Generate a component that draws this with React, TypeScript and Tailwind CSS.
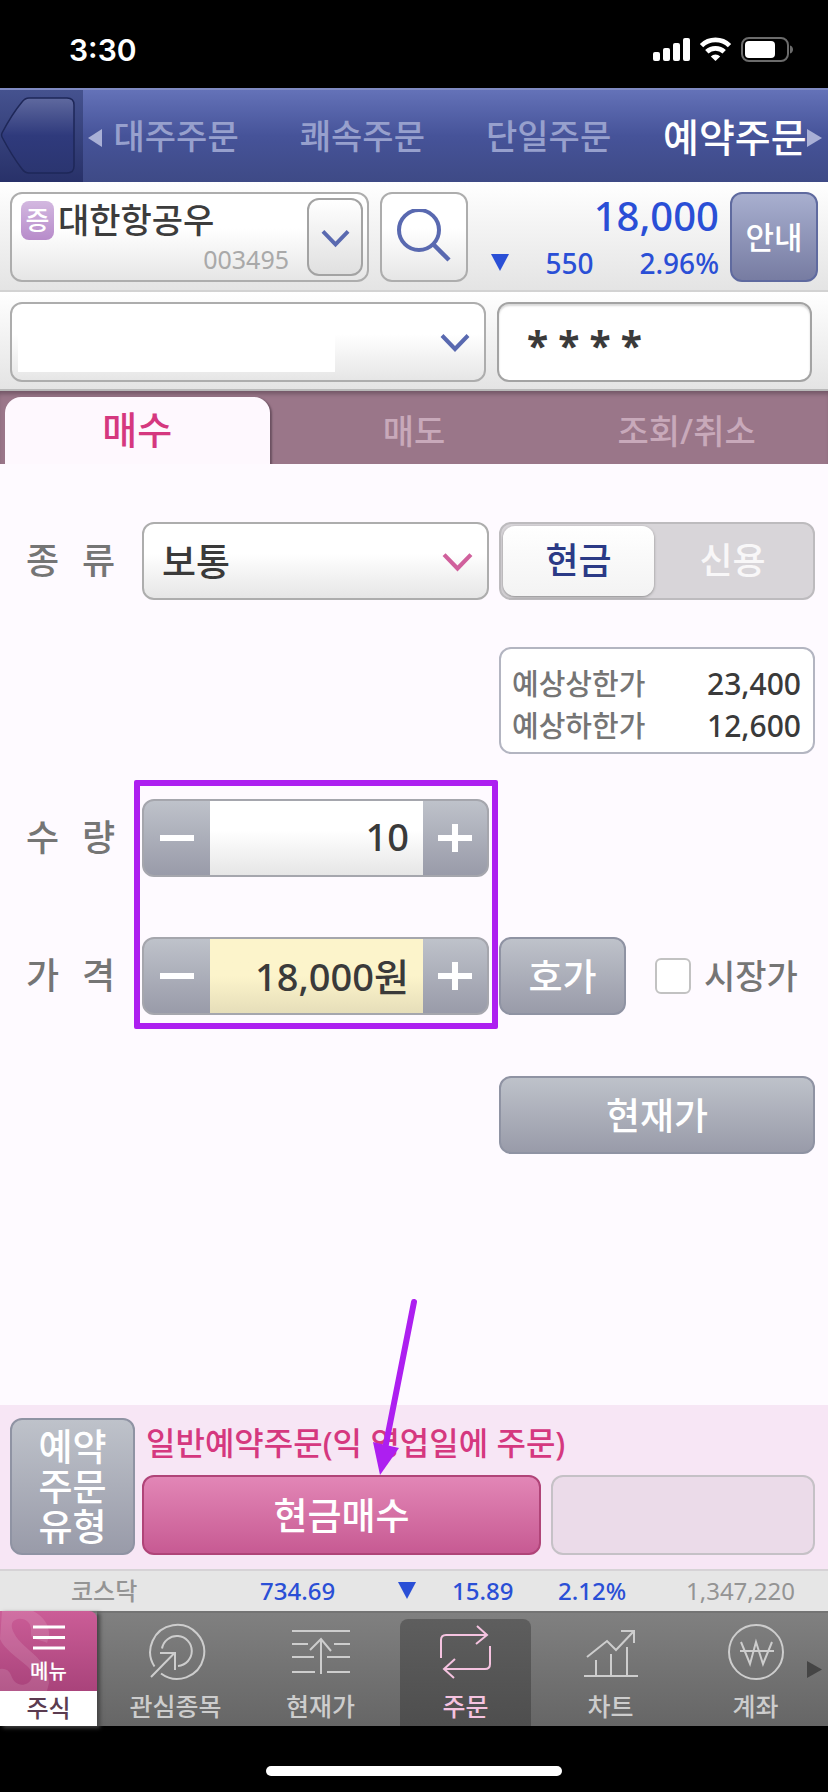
import { useState } from "react";
import type { ReactNode } from "react";
import clsx from "clsx";

const orderTabs = ["대주주문", "쾌속주문", "단일주문"];

const greyButton =
  "rounded-xl border-2 border-[#8f93a3] bg-linear-to-b from-[#bec2ca] to-[#999ba9] text-white font-medium";
const paleBox =
  "rounded-xl border-2 border-[#adadad] bg-linear-to-b from-white from-40% to-[#e6e6e6]";

function Chevron({ className }: { className?: string }) {
  return (
    <svg viewBox="0 0 30 20" className={className} fill="none" stroke="currentColor" strokeWidth="4">
      <path d="M2 2.5 15 16 28 2.5" />
    </svg>
  );
}

function StatusBar() {
  return (
    <div className="flex h-[88px] items-center justify-between bg-black pr-[34px] pl-[69px] pt-3 text-white">
      <span className="font-['Inter',sans-serif] text-[30px] leading-none font-semibold">3:30</span>
      <svg width="141" height="26" viewBox="0 0 141 26">
        <g fill="#fff">
          <rect x="0" y="15" width="7" height="9" rx="2" />
          <rect x="10" y="11" width="7" height="13" rx="2" />
          <rect x="20" y="6" width="7" height="18" rx="2" />
          <rect x="30" y="1" width="7" height="23" rx="2" />
          <path d="M62.5 24 57.8 19.4a6.800 6.800 0 0 1 9.400 0Z" />
        </g>
        <g fill="none" stroke="#fff" strokeWidth="4.800">
          <path d="M48.500 8.600a20 20 0 0 1 28 0" />
          <path d="M53.800 14.800a12.500 12.500 0 0 1 17.400 0" />
        </g>
        <rect x="89" y="1" width="46" height="23" rx="7" fill="none" stroke="#6b6b6b" strokeWidth="2" />
        <rect x="92" y="4" width="30" height="17" rx="4" fill="#fff" />
        <path d="M137 8.500c4 1 4 7 0 8Z" fill="#6b6b6b" />
      </svg>
    </div>
  );
}

function TopNav() {
  return (
    <nav className="flex h-[94px] items-center border-t-2 border-[#7f8ac2] bg-linear-to-b from-[#6472b8] via-[#465399] to-[#3e4a86]">
      <button aria-label="뒤로" className="h-full w-[83px] shrink-0 bg-linear-to-b from-[#45528f] to-[#283169]">
        <svg viewBox="0 0 83 92" className="h-full w-full">
          <defs>
            <linearGradient id="back" x1="0" y1="0" x2="0" y2="1">
              <stop offset="0" stopColor="#5f699f" />
              <stop offset="0.5" stopColor="#2f3a7c" />
              <stop offset="1" stopColor="#2b3570" />
            </linearGradient>
          </defs>
          <path
            d="M2 43Q12 24 22 12q3-4 7-4h38q7 0 7 7v61q0 7-7 7H29q-4 0-7-4Q12 66 2 47q-1-2 0-4Z"
            fill="url(#back)"
            stroke="#1e2758"
            strokeWidth="1.500"
          />
        </svg>
      </button>
      <div className="relative grid flex-1 grid-cols-4 items-center text-center text-[34px] leading-none font-medium whitespace-nowrap text-[#97a0cd]">
        {orderTabs.map((tab) => (
          <a key={tab} href="#">
            {tab}
          </a>
        ))}
        <a href="#" className="text-[39px] text-white">
          예약주문
        </a>
        <svg width="14" height="18" viewBox="0 0 14 18" className="absolute top-3 left-[5px]">
          <path d="M14 0v18L0 9Z" fill="#a9b0d6" />
        </svg>
        <svg width="15" height="18" viewBox="0 0 15 18" className="absolute top-3 right-[6px]">
          <path d="M0 0v18l15-9Z" fill="#a9b0d6" />
        </svg>
      </div>
    </nav>
  );
}

function StockRow() {
  return (
    <section className="flex h-[110px] items-start border-b-2 border-[#d2d2d2] bg-linear-to-b from-white to-[#e4e4e4] px-[10px] pt-[10px]">
      <div className={clsx(paleBox, "flex h-[90px] w-[359px] p-1")}>
        <div className="flex-1 pr-[18px] pl-[5px]">
          <div className="flex items-center gap-1">
            <span className="flex h-[39px] w-[33px] items-center justify-center rounded-lg bg-linear-to-b from-[#d3b8e0] to-[#b78bca] text-[26px] leading-none font-medium text-white">
              증
            </span>
            <span className="text-[34px] leading-[44px] font-medium whitespace-nowrap text-[#3c3c3c]">대한항공우</span>
          </div>
          <p className="text-right text-[25px] leading-[34px] text-[#a9a9a9]">003495</p>
        </div>
        <button
          aria-label="종목 선택"
          className="flex w-[56px] items-center justify-center rounded-xl border-2 border-[#a3a3a3] bg-linear-to-b from-white to-[#e0e0e0] pt-1 text-[#5969b0]"
        >
          <Chevron className="w-[29px]" />
        </button>
      </div>
      <button aria-label="종목 검색" className={clsx(paleBox, "ml-[11px] flex h-[90px] w-[88px] items-center justify-center")}>
        <svg width="56" height="56" viewBox="0 0 56 56" fill="none" stroke="#5969b0" strokeWidth="4">
          <circle cx="23" cy="21" r="20" />
          <path d="m37 35 16 16" strokeWidth="4.500" />
        </svg>
      </button>
      <div className="flex-1 pr-[11px] pl-[22px] text-right font-medium text-[#2a4fd6]">
        <p className="text-[40px] leading-[48px]">18,000</p>
        <div className="flex items-center text-[28px] leading-[46px]">
          <svg width="20" height="18" viewBox="0 0 20 18">
            <path d="M1 0h18l-9 17Z" fill="currentColor" />
          </svg>
          <span className="mr-[46px] ml-auto">550</span>
          <span>2.96%</span>
        </div>
      </div>
      <button className="h-[90px] w-[88px] rounded-xl border-2 border-[#5f6a9f] bg-linear-to-b from-[#a8afcf] to-[#777ca2] text-[31px] font-medium text-white">
        안내
      </button>
    </section>
  );
}

function AccountRow() {
  return (
    <section className="grid h-[99px] grid-cols-[476fr_315fr] items-start gap-[11px] border-b-2 border-[#b9b9b9] bg-linear-to-b from-white to-[#e4e4e4] pt-[10px] pr-4 pl-[10px]">
      <div className="relative">
        <select aria-label="계좌" className={clsx(paleBox, "block h-[80px] w-full appearance-none")} />
        <span className="pointer-events-none absolute top-1 bottom-[10px] left-2 w-2/3 bg-white" />
        <Chevron className="pointer-events-none absolute top-[31px] right-4 w-[30px] text-[#5969b0]" />
      </div>
      <input
        aria-label="비밀번호"
        defaultValue="* * * *"
        className="h-[80px] w-full min-w-0 rounded-xl border-2 border-[#a3a3a3] bg-white pt-1 pl-7 text-[39px] leading-none font-bold text-[#3a3a3a] shadow-[inset_0_2px_2px_#d8d8d8]"
      />
    </section>
  );
}

function SideTabs() {
  return (
    <div className="grid h-[73px] grid-cols-3 items-stretch bg-[#9a7689] px-[5px] pt-[6px] text-[34px] leading-none font-medium text-[#c8a9ba] shadow-[inset_0_5px_4px_-2px_#735767]">
      <button className="mr-2 rounded-t-2xl bg-[#fef8fe] pb-1 text-[38px] text-[#d5387f] shadow-[2px_1px_2px_#6b5060]">
        매수
      </button>
      <button>매도</button>
      <button>조회/취소</button>
    </div>
  );
}

type StepperProps = {
  id: string;
  value: string;
  tone?: string;
  onStep: (delta: number) => void;
  onChange: (value: string) => void;
};

function Stepper({ id, value, tone = "from-white from-40% to-[#e6e6e6]", onStep, onChange }: StepperProps) {
  return (
    <div className="flex h-[78px] overflow-hidden rounded-xl border-2 border-[#a5a6ad] bg-linear-to-b from-[#bec2ca] to-[#999ba9]">
      <button aria-label="감소" className="flex w-[66px] items-center justify-center" onClick={() => onStep(-1)}>
        <span className="h-[6px] w-[34px] bg-white" />
      </button>
      <input
        id={id}
        value={value}
        onChange={(e) => onChange(e.target.value)}
        className={clsx("min-w-0 flex-1 bg-linear-to-b pr-[14px] pb-1 text-right text-[38px] leading-none font-medium text-[#3a3a3a]", tone)}
      />
      <button aria-label="증가" className="flex w-[64px] items-center justify-center" onClick={() => onStep(1)}>
        <svg width="34" height="28" viewBox="0 0 34 28" fill="#fff">
          <path d="M0 11h14V0h6v11h14v6H20v11h-6V17H0Z" />
        </svg>
      </button>
    </div>
  );
}

function RowLabel({ first, last, htmlFor }: { first: string; last: string; htmlFor: string }) {
  return (
    <label htmlFor={htmlFor} className="flex h-[78px] items-center justify-between pr-[17px] pl-4 text-[36px] leading-none font-medium text-[#757575]">
      <span>{first}</span>
      <span>{last}</span>
    </label>
  );
}

function OrderForm() {
  const [qty, setQty] = useState("10");
  const [price, setPrice] = useState("18,000원");

  const stepQty = (d: number) => setQty(String(Math.max(0, Number(qty) + d)));
  const stepPrice = (d: number) => {
    const won = Number(price.replace(/\D/g, "")) + d * 50;
    setPrice(`${won.toLocaleString("en-US")}원`);
  };

  return (
    <main className="grid flex-1 grid-cols-[122px_minmax(0,347fr)_minmax(0,316fr)] content-start gap-x-[10px] bg-[#fefaff] pt-[58px] pr-[13px] pb-20 pl-[10px]">
      <RowLabel first="종" last="류" htmlFor="kind" />
      <div className="relative">
        <select id="kind" className={clsx(paleBox, "h-[78px] w-full appearance-none pl-[18px] text-[37px] leading-none font-medium text-[#3a3a3a]")}>
          <option>보통</option>
        </select>
        <Chevron className="pointer-events-none absolute top-[30px] right-4 w-[31px] text-[#d0609c]" />
      </div>
      <div className="grid h-[78px] grid-cols-[151fr_157fr] rounded-xl border-2 border-[#bdbbbe] bg-[#d8d5d9] p-[2px] text-[36px] leading-none font-medium">
        <button className="rounded-xl bg-linear-to-b from-white to-[#f3f3f3] text-[#2b3a86] shadow-[0_1px_3px_#888]">현금</button>
        <button className="text-[#f8f7f8]">신용</button>
      </div>

      <dl className="col-start-3 mt-[47px] grid h-[107px] grid-cols-[auto_auto] content-center items-center justify-between rounded-xl border-2 border-[#b3b5c1] bg-white pt-2 pr-3 pl-[11px] text-[29px] leading-[42px] font-medium">
        <dt className="text-[#757575]">예상상한가</dt>
        <dd className="text-right text-[30px] text-[#3a3a3a]">23,400</dd>
        <dt className="text-[#757575]">예상하한가</dt>
        <dd className="text-right text-[30px] text-[#3a3a3a]">12,600</dd>
      </dl>

      <div className="col-start-1 mt-[45px]">
        <RowLabel first="수" last="량" htmlFor="qty" />
      </div>
      <div className="relative mt-[45px]">
        <Stepper id="qty" value={qty} onStep={stepQty} onChange={setQty} />
        {/* highlight round both steppers */}
        <div className="pointer-events-none absolute -top-[19px] -right-[9px] -left-2 z-10 h-[249px] rounded-xs border-6 border-[#ad1ff0]" />
      </div>

      <div className="col-start-1 mt-[60px]">
        <RowLabel first="가" last="격" htmlFor="price" />
      </div>
      <div className="mt-[60px]">
        <Stepper
          id="price"
          value={price}
          tone="from-[#fcf4cb] from-50% to-[#e6deb9]"
          onStep={stepPrice}
          onChange={setPrice}
        />
      </div>
      <div className="mt-[60px] flex h-[78px] items-center">
        <button className={clsx(greyButton, "h-full w-[127px] text-[37px] leading-none")}>호가</button>
        <label className="ml-[29px] flex items-center gap-[13px] text-[34px] leading-none font-medium whitespace-nowrap text-[#757575]">
          <input type="checkbox" className="size-9 appearance-none rounded-md border-2 border-[#c2c2c2] bg-white" />
          시장가
        </label>
      </div>

      <button className={clsx(greyButton, "col-start-3 mt-[61px] h-[78px] text-[37px] leading-none")}>현재가</button>
    </main>
  );
}

function OrderFooter() {
  return (
    <section className="flex h-[164px] gap-[7px] bg-[#f7e6f5] pt-[13px] pr-[13px] pb-[14px] pl-[10px]">
      <button className={clsx(greyButton, "w-[125px] px-6 text-[37px] leading-[40px]")}>예약 주문 유형</button>
      <div className="flex flex-1 flex-col justify-between">
        <p className="pl-1 text-[32px] leading-[50px] font-medium text-[#d5387f]">일반예약주문(익 영업일에 주문)</p>
        <div className="grid h-[80px] grid-cols-[399fr_264fr] gap-[10px]">
          <div className="relative">
            <button className="h-full w-full rounded-xl border-2 border-[#b04478] bg-linear-to-b from-[#e286b6] to-[#c75a93] text-[37px] leading-none font-medium text-white">
              현금매수
            </button>
            <svg
              width="56"
              height="180"
              viewBox="0 0 56 180"
              className="pointer-events-none absolute bottom-full left-1/2 ml-6"
              fill="#ad1ff0"
            >
              <path d="M48 7 19 154" stroke="#ad1ff0" strokeWidth="6" strokeLinecap="round" />
              <path d="M14 180 7 147l26 6Z" />
            </svg>
          </div>
          <div className="rounded-xl border-2 border-[#c5c1c6] bg-[#ebdbe9]" />
        </div>
      </div>
    </section>
  );
}

function IndexTicker() {
  return (
    <section className="grid h-[42px] grid-cols-[189fr_137fr_55fr_106fr_128fr_111fr] items-center border-t-2 border-[#d6d3d6] bg-[#e6e6e6] pr-[31px] pl-[71px] text-[24px] leading-none font-medium whitespace-nowrap text-[#2a4fd6]">
      <span className="text-[#949494]">코스닥</span>
      <span>734.69</span>
      <svg width="20" height="18" viewBox="0 0 20 18">
        <path d="M1 0h18l-9 17Z" fill="currentColor" />
      </svg>
      <span>15.89</span>
      <span>2.12%</span>
      <span className="font-normal text-[#949494]">1,347,220</span>
    </section>
  );
}

function NavItem({ label, active, children }: { label: string; active?: boolean; children: ReactNode }) {
  return (
    <a
      href="#"
      className={clsx(
        "mx-[7px] flex flex-1 flex-col items-center justify-between rounded-t-lg pt-[3px] pb-[5px] text-[25px] leading-[30px] font-medium",
        active ? "bg-linear-to-b from-[#5e5e5e] to-[#4e4e4e] text-[#f5c3e0]" : "text-[#cdcdcd]",
      )}
    >
      <svg width="60" height="60" viewBox="0 0 60 60" fill="none" stroke="currentColor" strokeWidth="2">
        {children}
      </svg>
      {label}
    </a>
  );
}

function BottomNav() {
  return (
    <nav className="relative flex h-[115px] border-t-2 border-[#747474] bg-linear-to-b from-[#808080] to-[#666]">
      <button className="-mt-[2px] flex w-[97px] shrink-0 flex-col text-center shadow-[3px_2px_4px_#444]">
        <span className="relative flex h-[80px] w-full flex-col items-center overflow-hidden rounded-tr-lg bg-linear-to-b from-[#cb5d97] to-[#a9437b] pt-[14px] text-[20px] leading-[24px] font-medium text-white">
          <svg viewBox="0 0 97 80" className="absolute inset-0" fill="#fff" fillOpacity="0.12">
            <path d="M2 0h31c10 5 17 14 16 25l-2 7c-5-3-8-2-14-5-2-1-2-3-2-8 0-8-6-12-13-11-5 1-7 4-6 9 2 8 9 15 17 22 12 10 20 20 20 33l-2 8H0V58c5-1 9 1 11 6 3 9 10 12 17 8 6-4 5-12-1-17C17 46 4 38 0 28Z" />
          </svg>
          <svg width="32" height="25" viewBox="0 0 32 25" stroke="#fff" strokeWidth="3">
            <path d="M0 2h32M0 12.500h32M0 23h32" />
          </svg>
          <span className="relative mt-[10px]">메뉴</span>
        </span>
        <span className="w-full flex-1 bg-white text-[24px] leading-[34px] font-medium text-[#5b3b50]">주식</span>
      </button>
      <div className="flex flex-1 pt-[6px] pl-[6px]">
        <NavItem label="관심종목">
          <path d="M8.500 44.500A27 27 0 1 1 15 51.500" />
          <path d="M16 26.500a15 15 0 1 1 16 17.500M5 55l23-23.500M14 31h15v17" />
        </NavItem>
        <NavItem label="현재가">
          <path d="M1 9h58M1 22h16M43 22h16M1 35h22M36 35h23M1 50h23M36 50h23M30 52V17M19 28l11-11 10 12" />
        </NavItem>
        <NavItem label="주문" active>
          <path d="M5 36V18q0-5 5-5h41M41 4l10 9-11 9M54 24v18q0 5-5 5H9M19 37 8 47l10 9" />
        </NavItem>
        <NavItem label="차트">
          <path d="M3 54h54M15 54V38M30 54V32M46 54V25M6 35l20-16 9 9L53 9M40 9h13v12" />
        </NavItem>
        <NavItem label="계좌">
          <circle cx="30" cy="30" r="27" />
          <path d="m15 20 9 22 6-22 7 22 9-22M14 29h34" />
        </NavItem>
      </div>
      <svg width="15" height="17" viewBox="0 0 15 17" className="absolute top-[48px] right-[6px]">
        <path d="M0 0v17l15-8.500Z" fill="#454545" />
      </svg>
    </nav>
  );
}

export default function App() {
  return (
    <div className="flex min-h-screen flex-col bg-black font-['Noto_Sans','Noto_Sans_CJK_KR',sans-serif]">
      <StatusBar />
      <TopNav />
      <StockRow />
      <AccountRow />
      <SideTabs />
      <OrderForm />
      <OrderFooter />
      <IndexTicker />
      <BottomNav />
      <div className="flex h-[66px] justify-center bg-black pt-10">
        <div className="h-[10px] w-[296px] rounded-full bg-white" />
      </div>
    </div>
  );
}
